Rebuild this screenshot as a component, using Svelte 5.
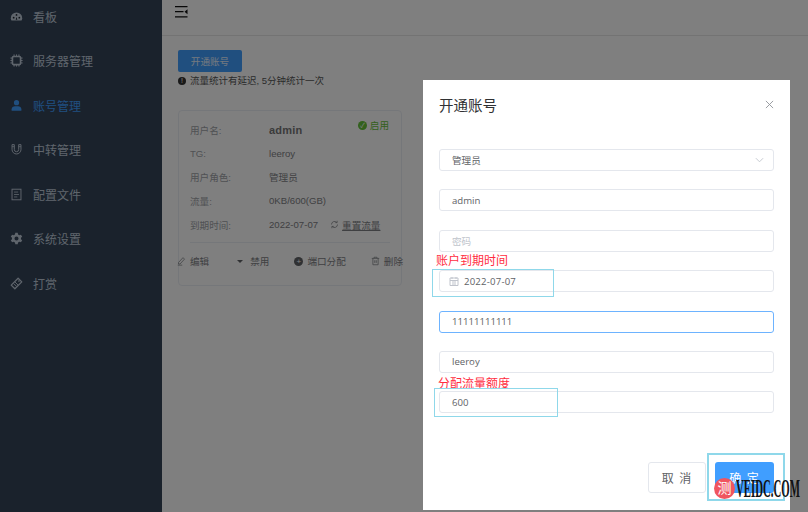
<script lang="ts">
  const menu = [
    { label: '看板', icon: 'dash' },
    { label: '服务器管理', icon: 'chip' },
    { label: '账号管理', icon: 'user', active: true },
    { label: '中转管理', icon: 'magnet' },
    { label: '配置文件', icon: 'file' },
    { label: '系统设置', icon: 'gear' },
    { label: '打赏', icon: 'tag' }
  ];

  const rows = [
    ['TG:', 'leeroy'],
    ['用户角色:', '管理员'],
    ['流量:', '0KB/600(GB)']
  ];

  const fields = [
    { value: 'admin' },
    { value: '', placeholder: '密码' },
    { value: '2022-07-07', date: true },
    { value: '11111111111', focus: true },
    { value: 'leeroy' },
    { value: '600' }
  ];
</script>

<div class="layout">
  <aside class="sidebar">
    {#each menu as item}
      <div class="menu-item" class:active={item.active}>
        <svg class="menu-icon" viewBox="0 0 16 16" fill="currentColor">
          {#if item.icon === 'dash'}
            <path d="M8 3a7 7 0 0 0-7 7c0 1.300.3 2.200.8 3h12.400c.5-.8.8-1.700.8-3a7 7 0 0 0-7-7z" />
            <circle cx="4.500" cy="9.500" r="1.100" fill="#1a222d" />
            <circle cx="8" cy="6" r="1.100" fill="#1a222d" />
            <circle cx="11.500" cy="9.500" r="1.100" fill="#1a222d" />
            <path d="M7 12l1-3.500L9 12z" fill="#1a222d" />
          {:else if item.icon === 'chip'}
            <rect x="3" y="3" width="10" height="10" rx="1.500" fill="none" stroke="currentColor" stroke-width="2" />
            <path d="M5 .5V3M8 .5V3M11 .5V3M5 13v2.500M8 13v2.500M11 13v2.500M.5 5H3M.5 8H3M.5 11H3M13 5h2.500M13 8h2.500M13 11h2.500" stroke="currentColor" stroke-width="1.200" />
          {:else if item.icon === 'user'}
            <circle cx="8" cy="4.500" r="3.200" />
            <path d="M2 14.500v-2c0-2 2-3.500 4-3.500h4c2 0 4 1.500 4 3.500v2z" />
          {:else if item.icon === 'magnet'}
            <path d="M2.500 2v6a5.500 5.500 0 0 0 11 0V2h-2.800v6a2.700 2.700 0 0 1-5.400 0V2z" fill="none" stroke="currentColor" stroke-width="1.200" />
            <path d="M2.500 4.500h2.800M10.700 4.500h2.800" stroke="currentColor" />
          {:else if item.icon === 'file'}
            <rect x="2.500" y="1.500" width="11" height="13" fill="none" stroke="currentColor" stroke-width="1.200" />
            <path d="M5 5h5M5 8h6M5 11h4" stroke="currentColor" />
          {:else if item.icon === 'gear'}
            <path fill-rule="evenodd" d="M6.500 1h3l.4 2 1.700 1 1.900-.7 1.500 2.600-1.500 1.300v1.600l1.500 1.300-1.500 2.600-1.900-.7-1.700 1-.4 2h-3l-.4-2-1.700-1-1.900.7L1 10.100l1.500-1.300V7.200L1 5.900l1.500-2.600 1.900.7 1.700-1zM8 5.500a2.500 2.500 0 1 0 0 5 2.500 2.500 0 0 0 0-5z" />
          {:else}
            <path d="M10 1.500l4.500 4.500-8.500 8.500L1.500 10z" fill="none" stroke="currentColor" stroke-width="1.600" stroke-linejoin="round" />
            <path d="M6 6l4 4M4.500 8l3.500 3.500" stroke="currentColor" stroke-width="1.200" />
            <circle cx="11" cy="5" r="1" />
          {/if}
        </svg>
        <span>{item.label}</span>
      </div>
    {/each}
  </aside>

  <main class="main">
    <header class="topbar">
      <svg class="fold" viewBox="0 0 13 12" fill="#111">
        <path d="M0 0h12.500v1.300H0zM0 5h8.500v1.300H0zM0 10.200h12.500v1.300H0zM12.500 3.200v5L9.500 5.700z" />
      </svg>
    </header>

    <section class="content">
      <button class="open-btn">开通账号</button>
      <p class="notice"><span class="notice-dot">!</span>流量统计有延迟, 5分钟统计一次</p>

      <div class="card">
        <div class="card-body">
          <span class="status"><span class="status-dot">✓</span>启用</span>
          <div class="row name-row"><span class="key">用户名:</span><b class="name">admin</b></div>
          {#each rows as [key, value]}
            <div class="row"><span class="key">{key}</span><span>{value}</span></div>
          {/each}
          <div class="row">
            <span class="key">到期时间:</span><span>2022-07-07</span>
            <span class="reset">
              <svg viewBox="0 0 12 12" fill="none" stroke="currentColor"><path d="M2 6a4 4 0 0 1 7-2.700M10 6a4 4 0 0 1-7 2.700M9.500 1v2.500H7M2.500 11V8.500H5" /></svg>
              <u>重置流量</u>
            </span>
          </div>
          <div class="card-line"></div>
        </div>
        <div class="actions">
          <span class="action"><svg viewBox="0 0 12 12" fill="none" stroke="currentColor"><path d="M8 1.500l2 2L4 10H2V8zM1 11.500h6" /></svg>编辑</span>
          <span class="action"><i class="caret"></i>禁用</span>
          <span class="action"><i class="plus">+</i>端口分配</span>
          <span class="action"><svg viewBox="0 0 12 12" fill="none" stroke="currentColor"><path d="M1 2.500h10M4 2.500V1h4v1.500M2.500 2.500V11h7V2.500M5 5v3.500M7 5v3.500" /></svg>删除</span>
        </div>
      </div>
    </section>
  </main>

  <div class="overlay"></div>

  <div class="modal">
    <div class="modal-head">
      <span>开通账号</span>
      <svg class="close" viewBox="0 0 10 10" stroke="#909399" stroke-width="1"><path d="M1 1l8 8M9 1l-8 8" /></svg>
    </div>
    <div class="form">
      <div class="input select">
        <span>管理员</span>
        <svg viewBox="0 0 10 6" fill="none" stroke="#c0c4cc"><path d="M1 1l4 4 4-4" /></svg>
      </div>
      {#each fields as field}
        <div class="input" class:focus={field.focus} class:date={field.date}>
          {#if field.date}
            <svg class="cal" viewBox="0 0 10 10" fill="none" stroke="#c0c4cc"><path d="M1 2h8v7.500H1zM1 4.500h8M3 1v2M7 1v2M3 6h4M3 8h4" /></svg>
          {/if}
          {#if field.placeholder}
            <span class="placeholder">{field.placeholder}</span>
          {:else}
            <span>{field.value}</span>
          {/if}
        </div>
      {/each}
    </div>
    <div class="modal-foot">
      <button class="cancel">取 消</button>
      <button class="confirm">确 定</button>
    </div>
  </div>

  <!-- annotations drawn on top of the screenshot -->
  <span class="note note-date">账户到期时间</span>
  <span class="note note-flow">分配流量额度</span>
  <div class="mark mark-date"></div>
  <div class="mark mark-flow"></div>
  <div class="mark mark-ok"></div>
  <div class="watermark"><span class="wm-badge">测</span><span class="wm-text">VEIDC.COM</span></div>
</div>

<style>
  :global(body) {
    margin: 0;
    font-family: "Liberation Sans", "Noto Sans CJK SC", sans-serif;
  }

  .layout {
    position: relative;
    display: flex;
    width: 808px;
    height: 512px;
    overflow: hidden;
    background: #fff;
  }

  .sidebar {
    width: 162px;
    flex-shrink: 0;
    background: #344459;
    box-sizing: border-box;
  }

  .menu-item {
    display: flex;
    align-items: center;
    height: 44.500px;
    padding-left: 10px;
    gap: 10px;
    font-size: 12px;
    color: #bfcbd9;
    position: relative;
    top: -6px;
  }

  .menu-item.active {
    color: #409eff;
  }

  .menu-icon {
    width: 13px;
    height: 13px;
    flex-shrink: 0;
  }

  .main {
    flex: 1;
    min-width: 0;
  }

  .topbar {
    height: 36px;
    padding: 6px 0 0 13px;
    box-sizing: border-box;
    border-bottom: 1px solid #e6e6e6;
  }

  .fold {
    display: block;
    width: 13px;
    height: 12px;
  }

  .content {
    padding: 14px 16px;
  }

  .open-btn {
    display: block;
    width: 64px;
    height: 22px;
    padding: 0;
    border: 0;
    border-radius: 2px;
    background: #409eff;
    color: #e8f3ff;
    font: inherit;
    font-size: 9.600px;
  }

  .notice {
    display: flex;
    align-items: center;
    gap: 4px;
    margin: 3px 0 0;
    font-size: 9.500px;
    line-height: 12px;
    color: #555;
  }

  .notice-dot {
    width: 8px;
    height: 8px;
    border-radius: 50%;
    background: #333;
    color: #fff;
    font-size: 7px;
    line-height: 8px;
    text-align: center;
  }

  .card {
    width: 224px;
    height: 176px;
    margin-top: 23px;
    border: 1px solid #ebeef5;
    border-radius: 4px;
    box-sizing: border-box;
    color: #7f8185;
    font-size: 9.600px;
  }

  .card-body {
    position: relative;
    padding: 7px 11px 0;
  }

  .row {
    display: flex;
    align-items: center;
    height: 23.700px;
  }

  .key {
    width: 79px;
    flex-shrink: 0;
    color: #a0a3a8;
  }

  .name {
    font-size: 11px;
    color: #777;
    letter-spacing: 0.2px;
  }

  .status {
    position: absolute;
    top: 7px;
    right: 12px;
    display: flex;
    align-items: center;
    gap: 3px;
    color: #67c23a;
  }

  .status-dot {
    width: 9px;
    height: 9px;
    border-radius: 50%;
    background: #67c23a;
    color: #fff;
    font-size: 7px;
    line-height: 9px;
    text-align: center;
  }

  .reset {
    display: flex;
    align-items: center;
    gap: 3px;
    margin-left: 12px;
  }

  .reset svg {
    width: 9px;
    height: 9px;
  }

  .card-line {
    height: 1px;
    margin-top: 6px;
    background: #ebeef5;
  }

  .actions {
    display: flex;
    justify-content: space-between;
    width: 226px;
    margin: 11px 0 0 -2px;
  }

  .action {
    display: flex;
    align-items: center;
    gap: 4px;
    white-space: nowrap;
  }

  .action svg {
    width: 9px;
    height: 10px;
  }

  .caret {
    width: 0;
    height: 0;
    margin: 0 3px;
    border: 3px solid transparent;
    border-top: 3px solid #606266;
    border-bottom: 0;
  }

  .plus {
    width: 9px;
    height: 9px;
    border-radius: 50%;
    background: #606266;
    color: #fff;
    font-size: 8px;
    font-style: normal;
    line-height: 9px;
    text-align: center;
  }

  .overlay {
    position: absolute;
    inset: 0;
    background: rgba(0, 0, 0, 0.5);
  }

  .modal {
    position: absolute;
    left: 423px;
    top: 80px;
    width: 367px;
    height: 430px;
    padding: 0 16px;
    box-sizing: border-box;
    background: #fff;
  }

  .modal-head {
    display: flex;
    justify-content: space-between;
    align-items: center;
    height: 48px;
    font-size: 14.500px;
    color: #303133;
  }

  .close {
    width: 9px;
    height: 9px;
  }

  .form {
    display: flex;
    flex-direction: column;
    gap: 18.400px;
    margin-top: 21px;
  }

  .input {
    display: flex;
    align-items: center;
    height: 22px;
    padding-left: 12px;
    box-sizing: border-box;
    border: 1px solid #e4e7ed;
    border-radius: 3px;
    font-family: "Open Sans", "Noto Sans CJK SC", sans-serif;
    font-size: 9.600px;
    color: #606266;
  }

  .input.focus {
    border-color: #6db3ff;
  }

  .input.date {
    padding-left: 9px;
    gap: 5px;
    letter-spacing: 0.2px;
  }

  .cal {
    width: 10px;
    height: 10px;
  }

  .placeholder {
    color: #c0c4cc;
  }

  .select {
    justify-content: space-between;
    padding-right: 9px;
  }

  .select svg {
    width: 9px;
    height: 6px;
  }

  .modal-foot {
    display: flex;
    justify-content: flex-end;
    gap: 9px;
    margin-top: 49px;
  }

  .modal-foot button {
    width: 59px;
    height: 31px;
    padding: 0;
    border-radius: 3px;
    font: inherit;
    font-size: 12px;
    letter-spacing: 1px;
  }

  .modal-foot .cancel {
    width: 58px;
    border: 1px solid #e4e7ed;
    background: #fff;
    color: #606266;
  }

  .confirm {
    border: 0;
    background: #409eff;
    color: #fff;
  }

  .note {
    position: absolute;
    color: #ff2d3f;
    font-size: 12px;
    line-height: 14px;
  }

  .note-date {
    left: 436px;
    top: 254px;
  }

  .note-flow {
    left: 438px;
    top: 377px;
  }

  .mark {
    position: absolute;
    box-sizing: border-box;
    border: 1px solid #8fd8ea;
  }

  .mark-date {
    left: 432px;
    top: 269px;
    width: 122px;
    height: 28px;
  }

  .mark-flow {
    left: 434px;
    top: 388px;
    width: 124px;
    height: 29px;
  }

  .mark-ok {
    left: 707px;
    top: 453px;
    width: 78px;
    height: 48px;
    border-width: 2px;
  }

  .watermark {
    position: absolute;
    left: 714px;
    top: 477px;
    display: flex;
    align-items: center;
    gap: 1px;
    width: 90px;
  }

  .wm-badge {
    flex-shrink: 0;
    width: 21px;
    height: 21px;
    border-radius: 50%;
    background: #f0555f;
    color: #fff;
    font-size: 14px;
    line-height: 21px;
    text-align: center;
  }

  .wm-text {
    display: block;
    flex-shrink: 0;
    font-family: "Liberation Serif", serif;
    font-size: 20px;
    font-weight: bold;
    color: #111;
    white-space: nowrap;
    transform: scale(0.54, 1.29);
    transform-origin: left center;
  }
</style>
